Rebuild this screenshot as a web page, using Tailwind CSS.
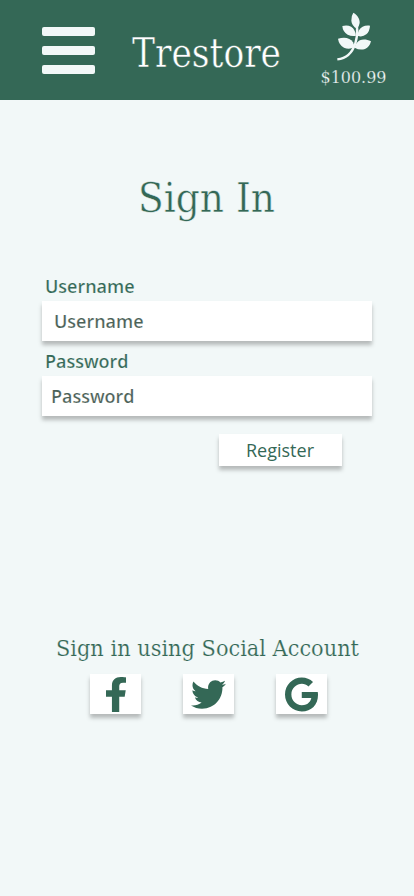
<!DOCTYPE html>
<html lang="en">
<head>
<meta charset="utf-8">
<meta name="viewport" content="width=device-width, initial-scale=1">
<title>Trestore</title>
<script src="https://cdn.jsdelivr.net/npm/@tailwindcss/browser@4"></script>
</head>
<body class="min-h-screen overflow-hidden bg-[#f2f8f8] font-['Open_Sans',sans-serif] text-[#346856]">
<header class="flex h-[100px] bg-[#346856]">
  <button class="ml-[42px] mt-[27px] flex h-[47px] w-[53px] flex-col justify-between" aria-label="Menu">
    <span class="h-[9px] w-full rounded-[2px] bg-[#f2f8f8]"></span>
    <span class="h-[9px] w-full rounded-[2px] bg-[#f2f8f8]"></span>
    <span class="h-[9px] w-full rounded-[2px] bg-[#f2f8f8]"></span>
  </button>
  <h1 class="ml-[35px] mt-[25px]">
    <svg class="block h-[55px] w-[156px] overflow-visible font-['DejaVu_Serif',serif]" viewBox="0 0 156 55"><text x="2" y="41.5" font-size="41" textLength="149" lengthAdjust="spacingAndGlyphs" fill="#fff" stroke="#346856" stroke-width=".5">Trestore</text></svg>
  </h1>
  <div class="ml-[33px] mt-[12px] flex w-[72px] flex-col items-center">
    <svg class="h-[50px] w-[36px]" viewBox="35 22 108 150" fill="#f2f8f8">
      <path d="M84 24C98 32 104 45 103 55Q102 64 95 72Q79 63 78 48Q77 34 84 24Z"/>
      <path d="M51 64C67 59 82 65 87 77Q91 84 92 93Q79 96 67 90Q52 81 51 64Z"/>
      <path d="M134 63C119 61 107 66 101 77Q96 86 98 94Q112 98 123 89Q133 80 134 63Z"/>
      <path d="M38 102C57 96 75 99 83 113Q87 121 87 128Q71 136 56 129Q41 121 38 102Z"/>
      <path d="M137 110C120 102 103 103 94 115Q89 121 88 129Q103 138 119 133Q133 127 137 110Z"/>
      <path d="M95 66Q98 91 90 116Q76 160 36 164" fill="none" stroke="#f2f8f8" stroke-width="7"/>
    </svg>
    <svg class="block h-6 w-[72px] overflow-visible font-['DejaVu_Serif',serif]" viewBox="0 0 72 24"><text x="1.5" y="20.5" font-size="17.5" textLength="66" lengthAdjust="spacingAndGlyphs" fill="#f2f8f8" stroke="#346856" stroke-width=".25">$100.99</text></svg>
  </div>
</header>
<main class="flex flex-col">
  <h2 class="mt-[70px] flex justify-center">
    <svg class="block h-[60px] w-[140px] overflow-visible font-['DejaVu_Serif',serif]" viewBox="0 0 140 60"><text x="1" y="42" font-size="41" textLength="137" lengthAdjust="spacingAndGlyphs" fill="#346856" stroke="#f2f8f8" stroke-width=".5">Sign In</text></svg>
  </h2>
  <form class="mx-[42px] mt-[43px] flex flex-col">
    <label class="flex h-7 items-center pl-[3px]"><svg class="h-7 w-[94px] overflow-visible" viewBox="0 0 94 28"><text x="0" y="20" font-size="18" font-weight="600" textLength="89.5" fill="#346856" stroke="#f2f8f8" stroke-width=".2">Username</text></svg></label>
    <div class="flex h-10 items-center bg-white pl-3 shadow-[0_4px_4px_rgba(0,0,0,0.25)]"><svg class="h-7 w-[94px] overflow-visible" viewBox="0 0 94 28"><text x="0" y="21" font-size="18" font-weight="600" textLength="89.5" fill="#4a6056" stroke="#fff" stroke-width=".2">Username</text></svg></div>
    <label class="mt-[7px] flex h-7 items-center pl-[3px]"><svg class="h-7 w-[94px] overflow-visible" viewBox="0 0 94 28"><text x="0" y="20" font-size="18" font-weight="600" textLength="83.5" fill="#346856" stroke="#f2f8f8" stroke-width=".2">Password</text></svg></label>
    <div class="flex h-10 items-center bg-white pl-[9px] shadow-[0_4px_4px_rgba(0,0,0,0.25)]"><svg class="h-7 w-[94px] overflow-visible" viewBox="0 0 94 28"><text x="0" y="21" font-size="18" font-weight="600" textLength="83.5" fill="#4a6056" stroke="#fff" stroke-width=".2">Password</text></svg></div>
    <button type="button" class="mr-[30px] mt-[18px] h-8 w-[123px] self-end bg-white pr-px text-[18px] leading-8 shadow-[0_4px_4px_rgba(0,0,0,0.25)]">Register</button>
  </form>
  <section class="mt-[164px] flex flex-col">
    <h3 class="ml-[54px]">
      <svg class="block h-[44px] w-[310px] overflow-visible font-['DejaVu_Serif',serif]" viewBox="0 0 310 44"><text x="2" y="26" font-size="21.5" textLength="303" lengthAdjust="spacingAndGlyphs" fill="#346856" stroke="#f2f8f8" stroke-width=".2">Sign in using Social Account</text></svg>
    </h3>
    <div class="ml-[90px] flex gap-[42px]">
      <a class="flex h-10 w-[51px] justify-center bg-white pt-[3px] shadow-[0_4px_4px_rgba(0,0,0,0.25)]"><svg class="ml-px h-[35px] w-[20px]" viewBox="22.89 0 274.22 512" preserveAspectRatio="none" fill="#346856"><path d="M279.14 288l14.22-92.66h-88.91v-60.13c0-25.35 12.42-50.06 52.24-50.06h40.42V6.26S260.43 0 225.36 0c-73.22 0-121.08 44.38-121.08 124.72v70.62H22.89V288h81.39v224h100.17V288z"/></svg></a>
      <a class="flex h-10 w-[51px] justify-center bg-white pt-[3px] shadow-[0_4px_4px_rgba(0,0,0,0.25)]"><svg class="h-[35px] w-[35px]" viewBox="0 0 512 512" fill="#346856"><path d="M459.37 151.716c.325 4.548.325 9.097.325 13.645 0 138.72-105.583 298.558-298.558 298.558-59.452 0-114.68-17.219-161.137-47.106 8.447.974 16.568 1.299 25.34 1.299 49.055 0 94.213-16.568 130.274-44.832-46.132-.975-84.792-31.188-98.112-72.772 6.498.974 12.995 1.624 19.818 1.624 9.421 0 18.843-1.3 27.614-3.573-48.081-9.747-84.143-51.98-84.143-102.985v-1.299c13.969 7.797 30.214 12.67 47.431 13.319-28.264-18.843-46.781-51.005-46.781-87.391 0-19.492 5.197-37.36 14.294-52.954 51.655 63.675 129.3 105.258 216.365 109.807-1.624-7.797-2.599-15.918-2.599-24.04 0-57.828 46.782-104.934 104.934-104.934 30.213 0 57.502 12.67 76.67 33.137 23.715-4.548 46.456-13.32 66.599-25.34-7.798 24.366-24.366 44.833-46.132 57.827 21.117-2.273 41.584-8.122 60.426-16.243-14.292 20.791-32.161 39.308-52.628 54.253z"/></svg></a>
      <a class="flex h-10 w-[51px] justify-center bg-white pt-[3px] shadow-[0_4px_4px_rgba(0,0,0,0.25)]"><svg class="h-[35px] w-[33px]" viewBox="0 0 488 512" preserveAspectRatio="none" fill="#346856"><path d="M488 261.8C488 403.3 391.1 504 248 504 110.8 504 0 393.2 0 256S110.8 8 248 8c66.8 0 123 24.5 166.3 64.9l-67.5 64.9C258.5 52.6 94.3 116.6 94.3 256c0 86.5 69.1 156.6 153.7 156.6 98.2 0 135-70.4 140.8-106.9H248v-85.3h236.1c2.3 12.7 3.9 24.9 3.9 41.4z"/></svg></a>
    </div>
  </section>
</main>
</body>
</html>
